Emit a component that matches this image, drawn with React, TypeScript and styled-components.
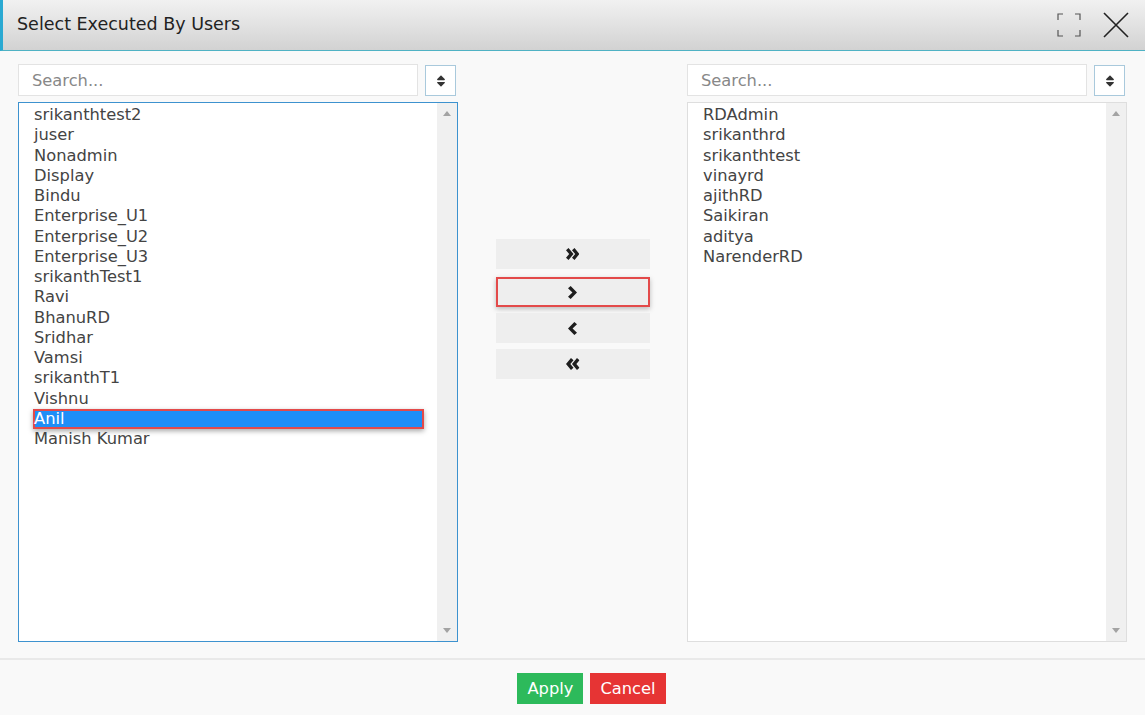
import * as React from 'react';
import styled, { createGlobalStyle } from 'styled-components';
import { FaSort } from 'react-icons/fa';

const GlobalStyle = createGlobalStyle`
  html, body {
    margin: 0;
    padding: 0;
    background: #ffffff;
  }
  * { box-sizing: border-box; }
  body {
    font-family: "DejaVu Sans", Verdana, sans-serif;
    color: #444;
  }
`;

const available = [
  'srikanthtest2', 'juser', 'Nonadmin', 'Display', 'Bindu', 'Enterprise_U1',
  'Enterprise_U2', 'Enterprise_U3', 'srikanthTest1', 'Ravi', 'BhanuRD', 'Sridhar',
  'Vamsi', 'srikanthT1', 'Vishnu', 'Anil', 'Manish Kumar',
];

const chosen = ['RDAdmin', 'srikanthrd', 'srikanthtest', 'vinayrd', 'ajithRD', 'Saikiran', 'aditya', 'NarenderRD'];

const Dialog = styled.div`
  width: 1145px;
  height: 715px;
  display: flex;
  flex-direction: column;
  background: #f9f9f9;
`;

const Header = styled.div`
  height: 51px;
  flex: 0 0 51px;
  display: flex;
  align-items: center;
  justify-content: space-between;
  padding: 0 16px 3px 14px;
  border-left: 3px solid #2aa9d2;
  border-bottom: 1px solid #4fb2c4;
  background: linear-gradient(to bottom, #f1f1f1 0%, #e2e2e2 50%, #d2d2d2 100%);
`;

const Title = styled.h1`
  margin: 0;
  font-size: 17.5px;
  font-weight: normal;
  color: #222;
`;

const HeaderTools = styled.div`
  display: flex;
  align-items: center;
  gap: 22px;
  margin-top: 3px;
  color: #333;
`;

const Body = styled.div`
  flex: 1;
  display: grid;
  grid-template-columns: 440px 1fr 440px;
  padding: 13px 18px 16px 18px;
`;

const Column = styled.div`
  display: flex;
  flex-direction: column;
  gap: 6px;
`;

const SearchRow = styled.div`
  display: flex;
  gap: 7px;
  height: 32px;
`;

const SearchInput = styled.input`
  width: 400px;
  height: 32px;
  border: 1px solid #e3e3e3;
  background: #fff;
  padding: 0 13px;
  font-family: "DejaVu Sans", Verdana, sans-serif;
  font-size: 16.3px;
  color: #444;
  outline: none;
  &::placeholder { color: #888; }
`;

const SortButton = styled.button`
  width: 31px;
  height: 31px;
  margin-top: 1px;
  border: 1px solid #a9c9dc;
  background: #fff;
  display: flex;
  align-items: center;
  justify-content: center;
  padding: 0;
  color: #333;
  font-size: 14px;
`;

const ListBox = styled.div<{ $focused?: boolean }>`
  height: 540px;
  display: flex;
  background: #fff;
  border: 1px solid ${p => (p.$focused ? '#3d92cf' : '#dedede')};
`;

const Items = styled.ul`
  flex: 1;
  margin: 0;
  padding: 2px 13px 0 14px;
  list-style: none;
`;

const Item = styled.li<{ $selected?: boolean }>`
  height: 20.25px;
  line-height: 20px;
  font-size: 16.3px;
  padding-left: 1px;
  white-space: nowrap;
  color: ${p => (p.$selected ? '#fff' : '#444')};
  background: ${p => (p.$selected ? '#1e8ef7' : 'transparent')};
  box-shadow: ${p => (p.$selected ? 'inset 0 0 0 2px #e34a4a, 0 2px 5px rgba(0,0,0,0.35)' : 'none')};
`;

const ScrollTrack = styled.div`
  width: 20px;
  background: #f0f0f0;
  display: flex;
  flex-direction: column;
  justify-content: space-between;
  align-items: center;
  padding: 8px 0 8px;
`;

const Arrow = styled.span<{ $down?: boolean }>`
  width: 0;
  height: 0;
  border-left: 4px solid transparent;
  border-right: 4px solid transparent;
  ${p => (p.$down ? 'border-top: 5px solid #a3a3a3;' : 'border-bottom: 5px solid #a3a3a3;')}
`;

const Mover = styled.div`
  display: flex;
  flex-direction: column;
  align-items: center;
  gap: 6px;
  padding-top: 175px;
`;

const MoveButton = styled.button<{ $active?: boolean }>`
  width: 154px;
  height: 30px;
  flex: 0 0 30px;
  margin-top: ${p => (p.$active ? '2px' : '0')};
  border: ${p => (p.$active ? '2px solid #e34a4a' : 'none')};
  box-shadow: ${p => (p.$active ? '0 2px 5px rgba(0,0,0,0.25)' : 'none')};
  background: #eeeeee;
  display: flex;
  align-items: center;
  justify-content: center;
  padding: 0;
`;

const Footer = styled.div`
  flex: 0 0 57px;
  border-top: 2px solid #e9e9e9;
  display: flex;
  justify-content: center;
  align-items: flex-start;
  gap: 7px;
  padding: 13px 0 0 38px;
`;

const ActionButton = styled.button<{ $tone: 'ok' | 'cancel' }>`
  height: 31px;
  padding: 0 10px;
  border: none;
  color: #fff;
  font-family: "DejaVu Sans", Verdana, sans-serif;
  font-size: 16.3px;
  background: ${p => (p.$tone === 'ok' ? '#2dba5b' : '#e63434')};
`;

const ExpandIcon = () => (
  <svg width="24" height="24" viewBox="0 0 24 24" fill="none" stroke="#555" strokeWidth="1.2">
    <path d="M1 7V1h5M18 1h5v6M23 17v6h-5M6 23H1v-6" />
  </svg>
);

const CloseIcon = () => (
  <svg width="26" height="26" viewBox="0 0 26 26" fill="none" stroke="#222" strokeWidth="1.6">
    <path d="M1 1L25 25M25 1L1 25" />
  </svg>
);

/* heavy chevrons like the old font-awesome angle glyphs */
const chevronRight = (x: number, w: number, h: number, t: number) =>
  `M${x} ${t * 0.6}L${x + t * 0.7} 0L${x + w} ${h / 2}L${x + t * 0.7} ${h}L${x} ${h - t * 0.6}L${x + w - t * 1.2} ${h / 2}Z`;

const Chevrons = ({ dir, count }: { dir: 'left' | 'right'; count: 1 | 2 }) => {
  const h = count === 2 ? 12 : 13;
  const cw = count === 2 ? 7.5 : 9;
  const width = count === 2 ? 13.5 : 9;
  const d = count === 2
    ? chevronRight(0, cw, h, 3.6) + chevronRight(6, cw, h, 3.6)
    : chevronRight(0, cw, h, 3.8);
  return (
    <svg width={width} height={h} viewBox={`0 0 ${width} ${h}`} fill="#1e1e1e"
      style={dir === 'left' ? { transform: 'scaleX(-1)' } : undefined}>
      <path d={d} />
    </svg>
  );
};

const UserList = ({ users, selected, focused }: { users: string[]; selected?: string; focused?: boolean }) => (
  <ListBox $focused={focused}>
    <Items>
      {users.map(u => (
        <Item key={u} $selected={u === selected}>{u}</Item>
      ))}
    </Items>
    <ScrollTrack>
      <Arrow />
      <Arrow $down />
    </ScrollTrack>
  </ListBox>
);

export default function App() {
  return (
    <>
      <GlobalStyle />
      <Dialog>
        <Header>
          <Title>Select Executed By Users</Title>
          <HeaderTools>
            <ExpandIcon />
            <CloseIcon />
          </HeaderTools>
        </Header>
        <Body>
          <Column>
            <SearchRow>
              <SearchInput placeholder="Search..." />
              <SortButton><FaSort /></SortButton>
            </SearchRow>
            <UserList users={available} selected="Anil" focused />
          </Column>
          <Mover>
            <MoveButton><Chevrons dir="right" count={2} /></MoveButton>
            <MoveButton $active><Chevrons dir="right" count={1} /></MoveButton>
            <MoveButton><Chevrons dir="left" count={1} /></MoveButton>
            <MoveButton><Chevrons dir="left" count={2} /></MoveButton>
          </Mover>
          <Column>
            <SearchRow>
              <SearchInput placeholder="Search..." />
              <SortButton><FaSort /></SortButton>
            </SearchRow>
            <UserList users={chosen} />
          </Column>
        </Body>
        <Footer>
          <ActionButton $tone="ok">Apply</ActionButton>
          <ActionButton $tone="cancel">Cancel</ActionButton>
        </Footer>
      </Dialog>
    </>
  );
}
